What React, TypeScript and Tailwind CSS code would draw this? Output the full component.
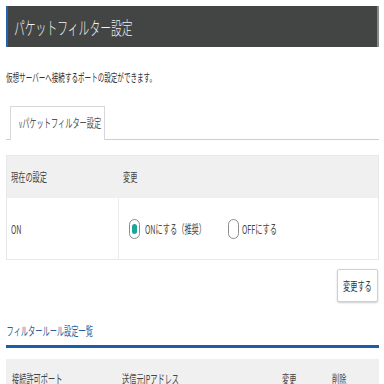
import React from "react";

function T({ children, className = "" }: { children: React.ReactNode; className?: string }) {
  return (
    <span className={"inline-block origin-left whitespace-nowrap " + className}>{children}</span>
  );
}

export default function App() {
  return (
    <div className="w-[384px] h-[384px] overflow-hidden bg-white pl-[6px] pr-[5px] pt-[6px] text-[#444] text-[12px] leading-[16px] [font-family:'Noto_Sans_CJK_JP','Noto_Sans',sans-serif]">
      <div className="h-[41px] bg-[#434544] border-l-[2px] border-l-[#2463ad] border-r-[2px] border-r-[#8a8a8a] flex items-center pl-[6px]">
        <T className="scale-x-[0.6] text-[18px] leading-[24px] text-[#f2f2f2] font-light">パケットフィルター設定</T>
      </div>
      <div className="mt-[22px] h-[16px] text-[#333]">
        <T className="scale-x-[0.57] text-[11.5px]">仮想サーバーへ接続するポートの設定ができます。</T>
      </div>
      <div className="mt-[21px] border-b border-[#cfcfcf] pl-[4px] flex">
        <div className="w-[95px] h-[34px] border border-b-0 border-[#d8d8d8] bg-white -mb-px flex items-center pl-[8px]">
          <T className="scale-x-[0.6] text-[12px] text-[#555]">
            <span className="text-[10px]">v</span>パケットフィルター設定
          </T>
        </div>
      </div>
      <div className="mt-[15px] border border-[#e8e8e8]">
        <div className="h-[42px] bg-[#f0f0f0] flex items-center">
          <div className="w-[112px] pl-[4px]"><T className="scale-x-[0.6]">現在の設定</T></div>
          <div className="pl-[4px]"><T className="scale-x-[0.6]">変更</T></div>
        </div>
        <div className="h-[61px] flex">
          <div className="w-[112px] pl-[4px] flex items-center border-r border-[#ececec]"><T className="scale-x-[0.6]">ON</T></div>
          <div className="flex items-center pl-[10px]">
            <div className="w-[99px] flex items-center">
              <div className="w-[11px] h-[20px] rounded-full border border-[#8c8c8c] flex items-center justify-center">
                <div className="w-[5px] h-[10px] rounded-full bg-[#1aa79a]" />
              </div>
              <div className="ml-[5px] w-[80px]"><T className="scale-x-[0.6]">ONにする（推奨）</T></div>
            </div>
            <div className="flex items-center">
              <div className="w-[11px] h-[20px] rounded-full border border-[#8c8c8c]" />
              <div className="ml-[3px] w-[60px]"><T className="scale-x-[0.6]">OFFにする</T></div>
            </div>
          </div>
        </div>
      </div>
      <div className="mt-[9px] flex justify-end pr-[1px]">
        <div className="w-[41px] h-[33px] border border-[#d0d0d0] rounded-[2px] bg-white shadow-[0_1px_2px_rgba(0,0,0,0.2)] flex items-center pl-[5px]">
          <T className="scale-x-[0.6] text-[#333]">変更する</T>
        </div>
      </div>
      <div className="mt-[21px] pb-[6px] border-b-[3px] border-[#1d5ca6] text-[#2a5f9e]">
        <T className="scale-x-[0.6] pl-[1px]">フィルタールール設定一覧</T>
      </div>
      <div className="mt-[11px] h-[40px] bg-[#f0f0f0] flex items-center">
        <div className="w-[116px] pl-[6px]"><T className="scale-x-[0.6]">接続許可ポート</T></div>
        <div className="w-[160px]"><T className="scale-x-[0.6]">送信元IPアドレス</T></div>
        <div className="w-[50px]"><T className="scale-x-[0.6]">変更</T></div>
        <div><T className="scale-x-[0.6]">削除</T></div>
      </div>
    </div>
  );
}
